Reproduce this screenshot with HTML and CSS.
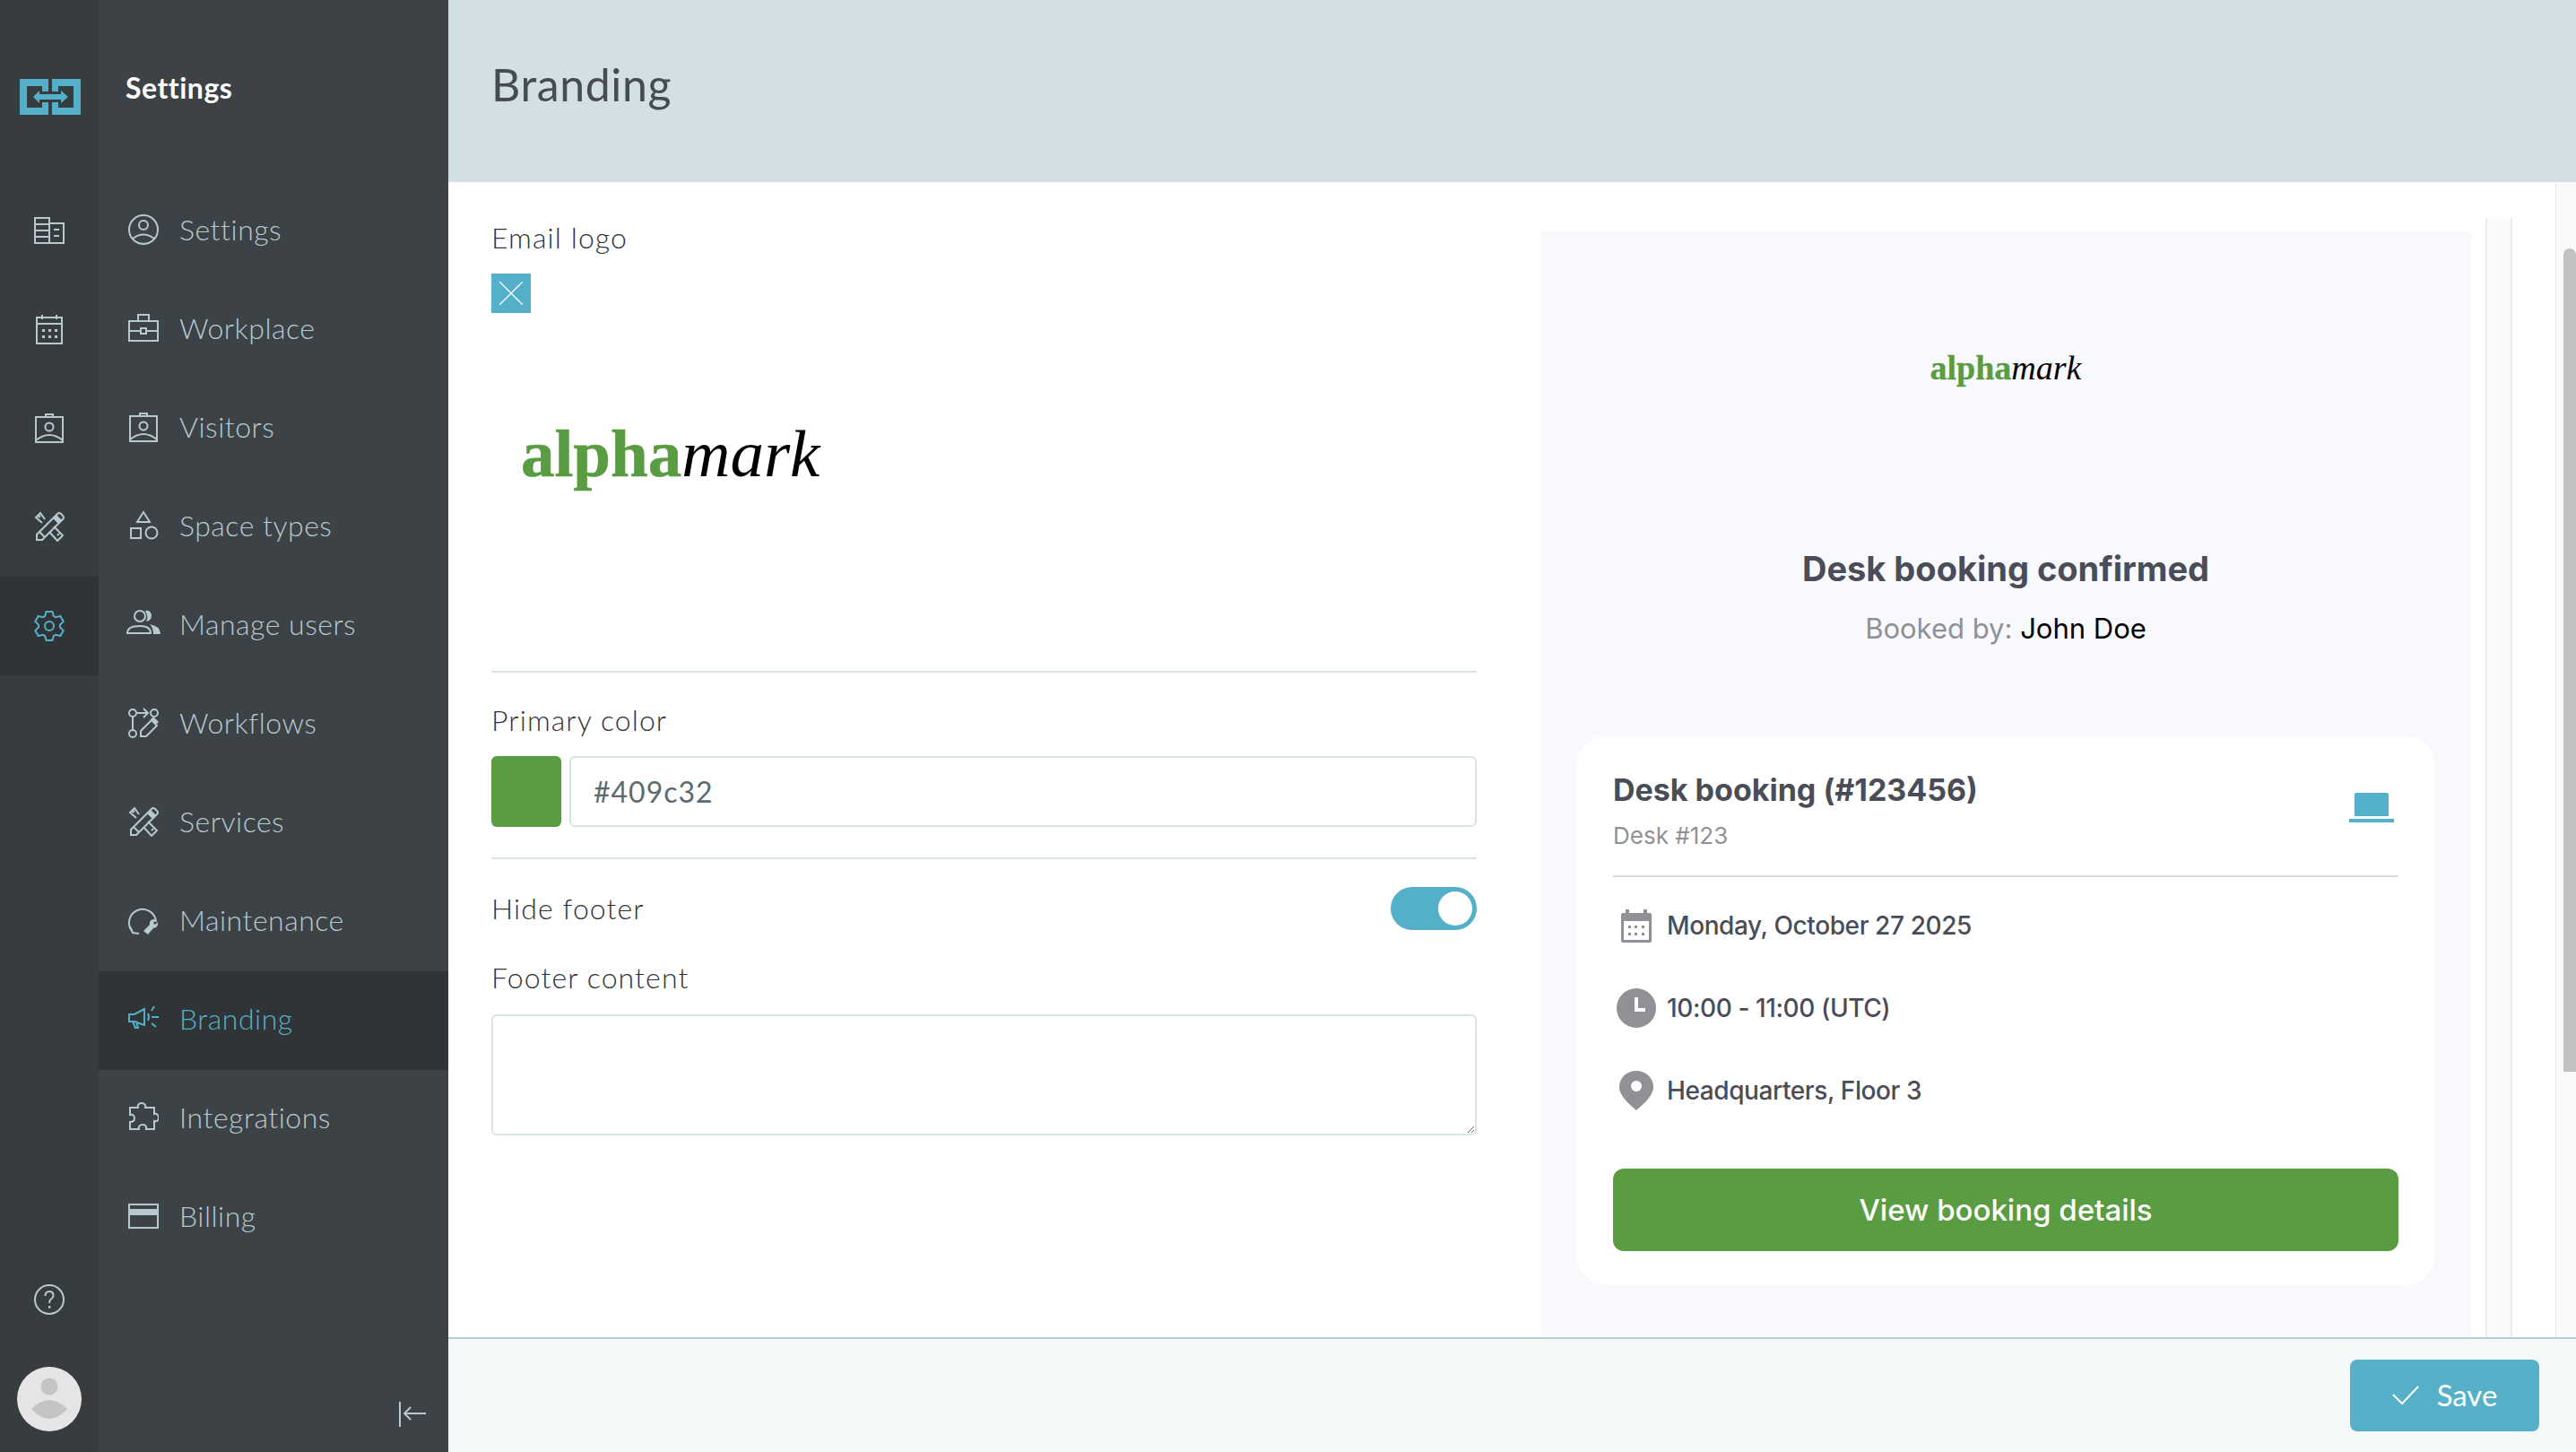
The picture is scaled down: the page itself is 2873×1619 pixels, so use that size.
FILE: index.html
```html
<!DOCTYPE html>
<html lang="en">

<head>
    <meta charset="UTF-8">
    <title>Branding - Settings</title>
    <link rel="stylesheet" href="styles.css">
</head>

<body>
    <!-- icon rail -->
    <aside class="rail">
        <div class="rail-logo">
            <svg width="68" height="40" viewBox="0 0 68 40" fill="#54b0c9">
                <path d="M0 0H32V14H25V8H8V32H25V26H32V40H0Z" />
                <path d="M36 0H68V40H36V26H43V32H60V8H43V14H36Z" />
                <path d="M15 20L22 13V17H46V13L54 20L46 27V23H22V27Z" />
            </svg>
        </div>
        <div class="rail-item">
            <svg class="icon" viewBox="0 0 34 34">
                <path d="M1 3H17V31H1ZM1 10H17M1 17H17M1 24H17M17 9H33V31H17M22 16H28M22 23H28" />
            </svg>
        </div>
        <div class="rail-item">
            <svg class="icon" viewBox="0 0 34 34">
                <path d="M3 4H31V33H3ZM3 11H31M9 1V6M25 1V6" />
                <path class="dots" d="M9 17h3v3H9zM16 17h3v3h-3zM23 17h3v3h-3zM9 24h3v3H9zM16 24h3v3h-3zM23 24h3v3h-3z" />
            </svg>
        </div>
        <div class="rail-item">
            <svg class="icon" viewBox="0 0 34 34">
                <path d="M2 5H32V33H2ZM13 5V2H21V5M2 31Q17 19 32 31" />
                <circle cx="17" cy="16" r="4.5" />
            </svg>
        </div>
        <div class="rail-item">
            <svg class="icon" viewBox="0 0 34 34">
                <path d="M3 32V26L26 3Q28 1 30 3L32 5Q34 7 32 9L9 32ZM6 23L12 29" />
                <path class="dots" d="M25 4L31 10L27 14L21 8Z" />
                <path d="M12 9L7 2L2 7L9 13M5 7L7 5M22 17L32 27L26 33L17 23M26 27L28 25" />
            </svg>
        </div>
        <div class="rail-item active">
            <svg class="icon" viewBox="0 0 34 34">
                <path d="M12.1 6L13.6 .9H20.4L21.9 6L24.1 7.3L29.3 6L32.7 11.9L28.9 15.7V18.3L32.7 22.1L29.3 28L24.1 26.7L21.9 28L20.4 33.1H13.6L12.1 28L9.9 26.7L4.7 28L1.3 22.1L5.1 18.3V15.7L1.3 11.9L4.7 6L9.9 7.3Z" />
                <circle cx="17" cy="17" r="5" />
            </svg>
        </div>
        <div class="rail-bottom">
            <svg class="icon" viewBox="0 0 34 34">
                <circle cx="17" cy="17" r="16" />
                <path d="M12.5 13Q12.5 8 17 8Q21.5 8 21.5 12.5Q21.5 15 19 16.5Q17 18 17 21" />
                <path class="dots" d="M16 24h2.4v2.6H16z" />
            </svg>
            <svg class="avatar" viewBox="0 0 72 72">
                <circle cx="36" cy="36" r="36" fill="#e5e5e5" />
                <circle cx="36" cy="22" r="9.5" fill="#c4c4c4" />
                <path d="M16 47Q26 37 36 37Q46 37 56 47Q46 58 36 58Q26 58 16 47Z" fill="#c4c4c4" />
            </svg>
        </div>
    </aside>

    <!-- settings menu -->
    <nav class="sidebar">
        <div class="sidebar-title">Settings</div>
        <a class="nav-item">
            <svg class="icon" viewBox="0 0 34 34">
                <circle cx="17" cy="17" r="16" />
                <circle cx="17" cy="12" r="5" />
                <path d="M5 27Q17 18 29 27" />
            </svg>
            Settings
        </a>
        <a class="nav-item">
            <svg class="icon" viewBox="0 0 34 34">
                <path d="M1 9H33V31H1ZM11 9V2H23V9M1 20H14M20 20H33M14 17H20V23H14Z" />
            </svg>
            Workplace
        </a>
        <a class="nav-item">
            <svg class="icon" viewBox="0 0 34 34">
                <path d="M2 5H32V33H2ZM13 5V2H21V5M2 31Q17 19 32 31" />
                <circle cx="17" cy="16" r="4.5" />
            </svg>
            Visitors
        </a>
        <a class="nav-item">
            <svg class="icon" viewBox="0 0 34 34">
                <path d="M17 2L24 13H10ZM3 20H14V31H3Z" />
                <circle cx="26" cy="25" r="6.5" />
            </svg>
            Space types
        </a>
        <a class="nav-item">
            <svg class="icon wide" viewBox="0 0 38 34">
                <circle cx="15" cy="8" r="6" />
                <path d="M1 27Q1 19 15 19Q27 19 27 27Z" />
                <path class="dots" d="M21 2Q27 1 28 7Q28 13 22 14Q25 9 21 2ZM26 17Q37 19 38 27V28H30Q30 21 26 17Z" />
            </svg>
            Manage users
        </a>
        <a class="nav-item">
            <svg class="icon" viewBox="0 0 34 34">
                <circle cx="5" cy="6" r="4" />
                <circle cx="5" cy="29" r="4" />
                <circle cx="29" cy="6" r="4" />
                <path d="M5 10V25M10 6H21M17 1L22 6L17 11M14 32V26L26 14L32 20L20 32Z" />
                <path class="dots" d="M25 13L28 10L34 16L31 19Z" />
            </svg>
            Workflows
        </a>
        <a class="nav-item">
            <svg class="icon" viewBox="0 0 34 34">
                <path d="M3 32V26L26 3Q28 1 30 3L32 5Q34 7 32 9L9 32ZM6 23L12 29" />
                <path class="dots" d="M25 4L31 10L27 14L21 8Z" />
                <path d="M12 9L7 2L2 7L9 13M5 7L7 5M22 17L32 27L26 33L17 23M26 27L28 25" />
            </svg>
            Services
        </a>
        <a class="nav-item">
            <svg class="icon" viewBox="0 0 34 34">
                <path d="M5 30A15 15 0 1 1 31 19M2 24L5 31L12 32" />
                <path class="dots" d="M17 29L24 22Q23 17 28 16Q30 16 31 17L28 20L30 22L33 19Q34 25 28 26L22 33Z" />
            </svg>
            Maintenance
        </a>
        <a class="nav-item active">
            <svg class="icon" viewBox="0 0 34 34">
                <path d="M1 12H7L18 6V24L7 20H1ZM5 20L8 27H11L9 20M22 11Q24 15 22 19M29 3L26 8M26 15H34M26 22L31 26" />
            </svg>
            Branding
        </a>
        <a class="nav-item">
            <svg class="icon" viewBox="0 0 34 34">
                <path d="M2 6H11C10 2 13 1 15 1C18 1 20 3 19 6H29V13C32 12 34 15 34 17C34 20 32 22 29 21V30H20C21 26 18 25 16 25C13 25 11 27 12 30H2V22C6 22 7 20 7 18C7 15 5 13 2 14Z" />
            </svg>
            Integrations
        </a>
        <a class="nav-item">
            <svg class="icon" viewBox="0 0 34 34">
                <path d="M1 4H33V30H1Z" />
                <path class="dots" d="M1 9H33V16H1Z" />
            </svg>
            Billing
        </a>
        <div class="collapse">
            <svg width="32" height="30" viewBox="0 0 32 30" fill="none" stroke="#b5c9cf" stroke-width="2">
                <path d="M2 1V29M31 14H7M14 7L7 14L14 21" />
            </svg>
        </div>
    </nav>

    <main class="main">
        <header class="page-header">
            <h1>Branding</h1>
        </header>

        <div class="content">
            <section class="form">
                <label class="label">Email logo</label>
                <button class="remove-btn">
                    <svg width="26" height="26" viewBox="0 0 26 26" stroke="#fff" stroke-width="1.3">
                        <path d="M0 0L26 26M26 0L0 26" />
                    </svg>
                </button>
                <div class="logo-preview">
                    <span class="alpha">alpha</span><span class="mark">mark</span>
                </div>
                <hr class="divider">
                <label class="label primary-label">Primary color</label>
                <div class="color-row">
                    <div class="swatch"></div>
                    <input class="color-input" type="text" value="#409c32">
                </div>
                <hr class="divider second">
                <div class="toggle-row">
                    <span class="label">Hide footer</span>
                    <span class="toggle"><span class="knob"></span></span>
                </div>
                <label class="label footer-label">Footer content</label>
                <textarea class="footer-text"></textarea>
            </section>

            <!-- email preview -->
            <section class="preview">
                <div class="preview-logo">
                    <span class="alpha">alpha</span><span class="mark">mark</span>
                </div>
                <h2>Desk booking confirmed</h2>
                <p class="booked">Booked by: <span>John Doe</span></p>
                <div class="card">
                    <div class="card-head">
                        <div>
                            <h3>Desk booking (#123456)</h3>
                            <div class="card-sub">Desk #123</div>
                        </div>
                        <svg class="laptop" viewBox="0 0 50 33" fill="#54b0c9">
                            <path d="M6 2Q6 0 8 0H42Q44 0 44 2V26H6Z" />
                            <path d="M0 29H50V33H0Z" />
                        </svg>
                    </div>
                    <div class="card-row">
                        <span class="row-icon">
                            <svg width="34" height="37" viewBox="0 0 34 37">
                                <path d="M0 6Q0 4 2 4H5V0H9V4H25V0H29V4H32Q34 4 34 6V35Q34 37 32 37H2Q0 37 0 35Z" fill="#8f9197" />
                                <path d="M3 13H31V34H3Z" fill="#fff" />
                                <path d="M8 18h3v3H8zM15 18h3v3h-3zM23 18h3v3h-3zM8 26h3v3H8zM15 26h3v3h-3zM23 26h3v3h-3z" fill="#8f9197" />
                            </svg>
                        </span>
                        Monday, October 27 2025
                    </div>
                    <div class="card-row">
                        <span class="row-icon">
                            <svg width="44" height="44" viewBox="0 0 44 44">
                                <circle cx="22" cy="22" r="22" fill="#8f9197" />
                                <path d="M20 10H24V22H32V26H20Z" fill="#fff" />
                            </svg>
                        </span>
                        10:00 - 11:00 (UTC)
                    </div>
                    <div class="card-row">
                        <span class="row-icon">
                            <svg width="38" height="44" viewBox="0 0 38 44">
                                <path d="M19 0C30 0 38 8 38 18C38 28 26 38 19 44C12 38 0 28 0 18C0 8 8 0 19 0Z" fill="#8f9197" />
                                <circle cx="19" cy="17" r="6" fill="#fff" />
                            </svg>
                        </span>
                        Headquarters, Floor 3
                    </div>
                    <button class="view-btn">View booking details</button>
                </div>
            </section>

            <div class="inner-track"></div>
            <div class="scrollbar"><div class="thumb"></div></div>
        </div>

        <footer class="page-footer">
            <button class="save-btn">
                <svg width="30" height="22" viewBox="0 0 30 22" fill="none" stroke="#fff" stroke-width="2">
                    <path d="M1 11L11 21L29 2" />
                </svg>
                Save
            </button>
        </footer>
    </main>
</body>

</html>
```

FILE: styles.css
```css
* {
    box-sizing: border-box;
}

body {
    margin: 0;
    height: 100vh;
    display: flex;
    overflow: hidden;
    font-family: Lato, "Open Sans", sans-serif;
    font-weight: 300;
    color: #3c4245;
    background-color: #fff;
}

.icon {
    width: 34px;
    height: 34px;
    flex: none;
    fill: none;
    stroke: currentColor;
    stroke-width: 2;
}

.icon .dots {
    fill: currentColor;
    stroke: none;
}

.icon.wide {
    width: 38px;
    margin: 0 -2px;
}

/* rail */
.rail {
    width: 110px;
    flex: none;
    display: flex;
    flex-direction: column;
    background-color: #373c3f;
    color: #b5c9cf;
}

.rail-logo {
    height: 203px;
    display: flex;
    justify-content: center;
    padding: 88px 0 0 2px;
}

.rail-item {
    height: 110px;
    display: flex;
    align-items: center;
    justify-content: center;
    padding-bottom: 2px;
}

.rail-item.active {
    padding-bottom: 0;
    background-color: #303437;
    color: #54b0c9;
}

.rail-bottom {
    margin-top: auto;
    padding-bottom: 23px;
    display: flex;
    flex-direction: column;
    align-items: center;
    gap: 58px;
}

.avatar {
    width: 72px;
    height: 72px;
}

/* sidebar */
.sidebar {
    width: 390px;
    flex: none;
    display: flex;
    flex-direction: column;
    background-color: #3c4245;
    color: #b5c9cf;
}

.sidebar-title {
    height: 203px;
    padding: 76px 0 0 30px;
    color: #fff;
    font-size: 32px;
    font-weight: 700;
    line-height: 44px;
    letter-spacing: .5px;
}

.nav-item {
    height: 110px;
    display: flex;
    align-items: center;
    gap: 23px;
    padding: 0 0 5px 33px;
    font-size: 32px;
    letter-spacing: .5px;
}

.nav-item.active {
    background-color: #303437;
    color: #54b0c9;
}

.collapse {
    margin-top: auto;
    padding: 0 24px 27px 0;
    display: flex;
    justify-content: flex-end;
}

/* main */
.main {
    flex: 1;
    min-width: 0;
    display: flex;
    flex-direction: column;
}

.page-header {
    height: 203px;
    flex: none;
    padding: 64px 0 0 48px;
    background-color: #d3e0e3;
}

.page-header h1 {
    margin: 0;
    color: #464c4f;
    font-size: 50px;
    font-weight: 400;
    line-height: 60px;
    letter-spacing: .6px;
}

.content {
    flex: 1;
    min-height: 0;
    display: flex;
    overflow: hidden;
}

.form {
    width: 1099px;
    flex: none;
    margin-left: 48px;
    padding-top: 42px;
}

.label {
    display: block;
    font-size: 32px;
    font-weight: 300;
    line-height: 40px;
    letter-spacing: 1.1px;
    color: #2f3437;
}

.remove-btn {
    display: flex;
    align-items: center;
    justify-content: center;
    width: 44px;
    height: 44px;
    margin-top: 20px;
    padding: 0;
    border: 0;
    background-color: #54b0c9;
}

.logo-preview {
    height: 399px;
    padding: 117px 0 0 33px;
    font-family: "Liberation Serif", serif;
    font-size: 75px;
    line-height: 80px;
    white-space: nowrap;
}

.alpha {
    color: #5a9c42;
    font-weight: 700;
    -webkit-text-stroke: .6px #5a9c42;
}

.mark {
    color: #000;
    font-style: italic;
    font-weight: 400;
}

.divider {
    height: 2px;
    margin: 0;
    border: 0;
    background-color: #d8e3e5;
}

.primary-label {
    margin-top: 33px;
}

.color-row {
    display: flex;
    gap: 9px;
    height: 79px;
    margin-top: 20px;
}

.swatch {
    width: 78px;
    border-radius: 6px;
    background-color: #5a9c42;
}

.color-input {
    flex: 1;
    padding: 0 25px;
    border: 2px solid #d8e3e5;
    border-radius: 6px;
    color: #5b6b70;
    font-family: inherit;
    font-size: 32px;
    font-weight: 400;
    letter-spacing: 1px;
}

.divider.second {
    margin-top: 34px;
}

.toggle-row {
    display: flex;
    align-items: center;
    justify-content: space-between;
    margin-top: 31px;
}

.toggle {
    display: flex;
    justify-content: flex-end;
    align-items: center;
    width: 96px;
    height: 48px;
    padding-right: 5px;
    border-radius: 24px;
    background-color: #54b0c9;
}

.knob {
    width: 38px;
    height: 38px;
    border-radius: 50%;
    background-color: #fff;
}

.footer-label {
    margin-top: 33px;
}

.footer-text {
    display: block;
    width: 100%;
    height: 135px;
    margin-top: 21px;
    border: 2px solid #d8e3e5;
    border-radius: 6px;
}

/* preview */
.preview {
    width: 1038px;
    flex: none;
    margin: 55px 0 0 71px;
    padding: 0 41px;
    background-color: #f8f9fc;
    font-family: Inter, sans-serif;
    font-weight: 400;
    color: #4a4d57;
}

.preview-logo {
    height: 347px;
    padding-top: 127px;
    text-align: center;
    font-family: "Liberation Serif", serif;
    font-size: 38px;
    line-height: 50px;
}

.preview-logo .alpha {
    -webkit-text-stroke: .3px #5a9c42;
}

.preview h2 {
    margin: 0;
    height: 60px;
    font-size: 38px;
    font-weight: 700;
    line-height: 58px;
    text-align: center;
}

.booked {
    margin: 16px 0 0;
    height: 40px;
    color: #8f9197;
    font-size: 31px;
    line-height: 39px;
    text-align: center;
}

.booked span {
    color: #000;
}

.card {
    margin-top: 100px;
    padding: 36px 40px 38px;
    border-radius: 32px;
    background-color: #fff;
}

.card-head {
    display: flex;
    justify-content: space-between;
    align-items: flex-start;
    margin-bottom: 8px;
    padding-right: 5px;
    padding-bottom: 26px;
    border-bottom: 2px solid #d9d9d9;
}

.card-head h3 {
    margin: 0;
    font-size: 34px;
    font-weight: 700;
    line-height: 48px;
}

.card-sub {
    margin-top: 9px;
    color: #8f9197;
    font-size: 26px;
    line-height: 36px;
}

.laptop {
    width: 50px;
    height: 33px;
    margin-top: 27px;
}

.card-row {
    display: flex;
    align-items: center;
    gap: 12px;
    height: 92px;
    padding-left: 4px;
    font-size: 28px;
    font-weight: 500;
    letter-spacing: -.4px;
}

.row-icon {
    display: flex;
    justify-content: center;
    width: 44px;
}

.view-btn {
    display: block;
    width: 100%;
    height: 92px;
    margin-top: 41px;
    border: 0;
    border-radius: 12px;
    background-color: #5a9c42;
    color: #fff;
    font-family: inherit;
    font-size: 33px;
    font-weight: 500;
}

.inner-track {
    width: 30px;
    flex: none;
    margin: 40px 0 0 16px;
    border-left: 2px solid #ececec;
    border-right: 2px solid #ececec;
    background-color: #fafafa;
}

.scrollbar {
    width: 23px;
    flex: none;
    margin-left: 48px;
    padding: 74px 0 0 8px;
    border-left: 1px solid #e8e8e8;
    background-color: #fafafa;
}

.thumb {
    height: 918px;
    border-radius: 8px 8px 0 0;
    background-color: #c1c1c1;
}

/* footer */
.page-footer {
    height: 128px;
    flex: none;
    display: flex;
    justify-content: flex-end;
    padding: 23px 41px 0 0;
    border-top: 2px solid #b8ccd3;
    background-color: #f5f8f8;
}

.save-btn {
    display: flex;
    align-items: center;
    justify-content: center;
    gap: 20px;
    width: 211px;
    height: 80px;
    padding-bottom: 4px;
    border: 0;
    border-radius: 8px;
    background-color: #55b0c8;
    color: #fff;
    font-family: inherit;
    font-size: 33px;
    font-weight: 400;
}
```
